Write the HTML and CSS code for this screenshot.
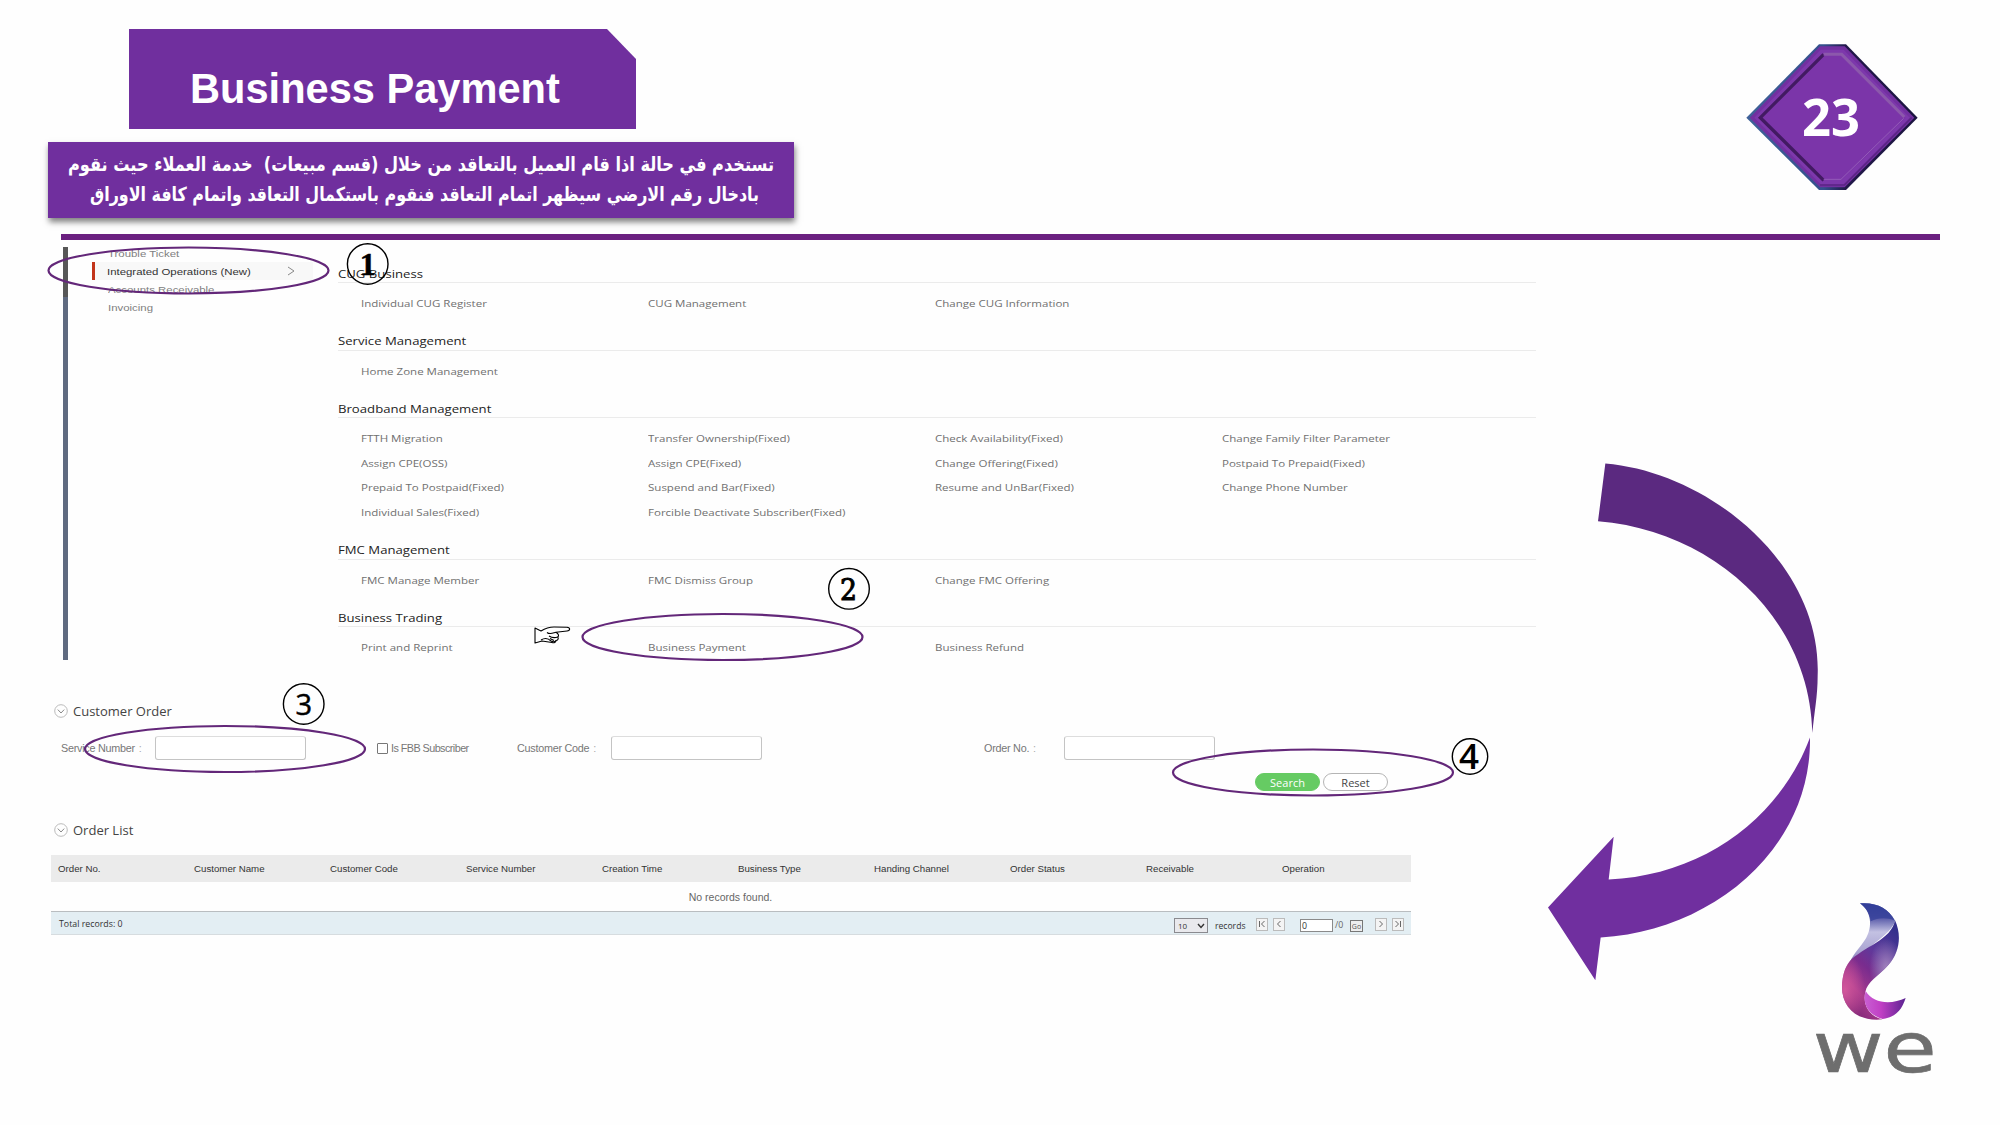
FILE: index.html
```html
<!DOCTYPE html>
<html lang="en">
<head>
<meta charset="utf-8">
<title>Business Payment</title>
<link rel="stylesheet" href="styles.css">
</head>
<body>
<div class="slide">
  <header class="head">
    <div class="head-left">
      <h1 class="title"><span>Business Payment</span></h1>
      <svg class="note" viewBox="0 0 746 76" lang="ar" direction="rtl">
        <text x="373" y="28.500" textLength="706" lengthAdjust="spacingAndGlyphs">تستخدم في حالة اذا قام العميل بالتعاقد من خلال (قسم مبيعات)&nbsp; خدمة العملاء حيث نقوم</text>
        <text x="376.500" y="58.500" textLength="669" lengthAdjust="spacingAndGlyphs">بادخال رقم الارضي سيظهر اتمام التعاقد فنقوم باستكمال التعاقد واتمام كافة الاوراق</text>
      </svg>
    </div>
    <svg class="badge" viewBox="0 0 522 444">
      <defs>
        <linearGradient id="rim" x1="0" y1="0" x2="1" y2="0"><stop offset="0" stop-color="#3f6299"/><stop offset=".45" stop-color="#34508d"/><stop offset=".58" stop-color="#22184a"/><stop offset="1" stop-color="#1b1440"/></linearGradient>
      </defs>
      <path d="M222 4H303L518 224L303 441H222L4 224Z" fill="url(#rim)"/>
      <path d="M225 10H299L508 224L299 433H225L14 224Z" fill="#7230a0"/>
      <path d="M227 20H296L494 224L296 424H227L28 224Z" fill="#7d38ac"/>
      <path d="M234 32H292L482 224L290 411H234L42 224Z" fill="#7b35a9"/>
      <path d="M236 34L46 224L236 412" fill="none" stroke="#421a62" stroke-width="10"/>
      <path d="M236 34H290L478 222" fill="none" stroke="#8c58ac" stroke-width="9"/>
      <path d="M236 409H288L476 226" fill="none" stroke="#935bb8" stroke-width="3"/>
      <path d="M225 426H298L500 224" fill="none" stroke="#5c2486" stroke-width="5"/>
      <text class="badge-num" x="258" y="279" text-anchor="middle" textLength="174" lengthAdjust="spacingAndGlyphs">23</text>
    </svg>
  </header>
  <div class="rule"></div>

  <div class="columns">
    <main>
      <section class="menu-shot">
        <div class="track"></div>
        <nav class="side">
          <div class="side-item"><span>Trouble Ticket</span></div>
          <div class="side-item active"><span>Integrated Operations (New)</span>
            <svg class="chev" viewBox="0 0 8 10"><path d="M1 1L7 5L1 9" fill="none" stroke="#888" stroke-width="1"/></svg></div>
          <div class="side-item"><span>Accounts Receivable</span></div>
          <div class="side-item"><span>Invoicing</span></div>
        </nav>
        <div class="groups">
          <h2><span>CUG Business</span></h2>
          <div class="links"><span>Individual CUG Register</span><span>CUG Management</span><span>Change CUG Information</span></div>
          <h2><span>Service Management</span></h2>
          <div class="links"><span>Home Zone Management</span></div>
          <h2><span>Broadband Management</span></h2>
          <div class="links">
            <span>FTTH Migration</span><span>Transfer Ownership(Fixed)</span><span>Check Availability(Fixed)</span><span>Change Family Filter Parameter</span>
            <span>Assign CPE(OSS)</span><span>Assign CPE(Fixed)</span><span>Change Offering(Fixed)</span><span>Postpaid To Prepaid(Fixed)</span>
            <span>Prepaid To Postpaid(Fixed)</span><span>Suspend and Bar(Fixed)</span><span>Resume and UnBar(Fixed)</span><span>Change Phone Number</span>
            <span>Individual Sales(Fixed)</span><span>Forcible Deactivate Subscriber(Fixed)</span>
          </div>
          <h2><span>FMC Management</span></h2>
          <div class="links"><span>FMC Manage Member</span><span>FMC Dismiss Group</span><span>Change FMC Offering</span></div>
          <h2><span>Business Trading</span></h2>
          <div class="links"><span>Print and Reprint</span><span>Business Payment</span><span>Business Refund</span></div>
        </div>
      </section>

      <section class="order-shot">
        <h3><svg class="fold" viewBox="0 0 14 14"><circle cx="7" cy="7" r="6.3"/><path d="M3.8 5.6L7 9L10.2 5.6"/></svg><span>Customer Order</span></h3>
        <div class="form">
          <label class="f-service">Service Number <i>:</i></label><div class="box"></div>
          <div class="check"></div><label class="f-fbb">Is FBB Subscriber</label>
          <label class="f-code">Customer Code <i>:</i></label><div class="box"></div>
          <label class="f-order">Order No. <i>:</i></label><div class="box"></div>
        </div>
        <div class="actions"><button class="go">Search</button><button>Reset</button></div>
        <h3><svg class="fold" viewBox="0 0 14 14"><circle cx="7" cy="7" r="6.3"/><path d="M3.8 5.6L7 9L10.2 5.6"/></svg><span>Order List</span></h3>
        <div class="table">
          <div class="thead"><span>Order No.</span><span>Customer Name</span><span>Customer Code</span><span>Service Number</span><span>Creation Time</span><span>Business Type</span><span>Handing Channel</span><span>Order Status</span><span>Receivable</span><span>Operation</span></div>
          <div class="empty">No records found.</div>
          <div class="tfoot">
            <span class="total">Total records: 0</span>
            <div class="select">10<svg viewBox="0 0 8 6"><path d="M1 1L4 4.5L7 1" fill="none" stroke="#333" stroke-width="1.4"/></svg></div>
            <span class="records">records</span>
            <svg class="pg" viewBox="0 0 12 14"><rect x=".5" y=".5" width="11" height="12"/><path d="M3.5 3V9M8.5 3L5.5 6L8.5 9"/></svg>
            <svg class="pg pg-prev" viewBox="0 0 12 14"><rect x=".5" y=".5" width="11" height="12"/><path d="M7.5 3L4.5 6L7.5 9"/></svg>
            <div class="page">0</div><span class="of">/0</span><div class="jump">Go</div>
            <svg class="pg" viewBox="0 0 12 14"><rect x=".5" y=".5" width="11" height="12"/><path d="M4.5 3L7.5 6L4.5 9"/></svg>
            <svg class="pg pg-last" viewBox="0 0 12 14"><rect x=".5" y=".5" width="11" height="12"/><path d="M8.5 3V9M3.5 3L6.5 6L3.5 9"/></svg>
          </div>
        </div>
      </section>
    </main>

    <aside>
      <svg class="arrow" viewBox="120 60 840 1460" preserveAspectRatio="none">
        <path fill="#5b2980" d="M316 67C630 92 965 350 953 660C953 720 943 760 937 822C930 500 640 255 294 229Z"/>
        <path fill="#702f9f" d="M930 834C935 1150 630 1378 302 1394L286 1514L144 1310L341 1112L326 1232C610 1220 840 1060 930 834Z"/>
      </svg>
      <svg class="logo" viewBox="90 60 390 530">
        <defs>
          <linearGradient id="tip" x1="0" y1="0" x2="0" y2="1"><stop offset="0" stop-color="#2d3b97"/><stop offset=".22" stop-color="#5355a6"/><stop offset=".45" stop-color="#c3c1e2"/><stop offset=".75" stop-color="#aaa4d2"/><stop offset="1" stop-color="#6e62a9"/></linearGradient>
          <linearGradient id="body" x1=".75" y1="0" x2=".2" y2="1"><stop offset="0" stop-color="#34308c"/><stop offset=".3" stop-color="#5d3a9c"/><stop offset=".5" stop-color="#792c8e"/><stop offset=".75" stop-color="#a83a8c"/><stop offset="1" stop-color="#7a2474"/></linearGradient>
          <radialGradient id="glow" cx=".05" cy=".7" r=".36"><stop offset="0" stop-color="#d2579b"/><stop offset="1" stop-color="#d2579b" stop-opacity="0"/></radialGradient>
          <radialGradient id="shine" cx=".78" cy=".48" r=".3"><stop offset="0" stop-color="#a183bd"/><stop offset="1" stop-color="#a183bd" stop-opacity="0"/></radialGradient>
          <linearGradient id="tail" x1="0" y1="0" x2="1" y2="0"><stop offset="0" stop-color="#c95fd3"/><stop offset=".4" stop-color="#c03fc4"/><stop offset="1" stop-color="#5b2391"/></linearGradient>
        </defs>
        <path fill="url(#tip)" d="M240 70C290 66 325 85 345 122C335 165 250 205 203 262C215 225 240 205 258 175C278 140 275 95 240 70Z"/>
        <path fill="#34409a" d="M240 70C290 66 325 85 345 122C320 112 295 112 272 124C270 100 258 84 240 70Z" opacity=".75"/>
        <path fill="url(#body)" d="M345 121C365 165 360 215 325 255C295 288 262 305 256 336C248 372 265 408 308 418C235 426 186 385 186 320C187 285 195 262 208 245C250 200 335 180 345 121Z"/>
        <path fill="url(#glow)" d="M345 121C365 165 360 215 325 255C295 288 262 305 256 336C248 372 265 408 308 418C235 426 186 385 186 320C187 285 195 262 208 245C250 200 335 180 345 121Z"/>
        <path fill="url(#shine)" d="M345 121C365 165 360 215 325 255C295 288 262 305 256 336C248 372 265 408 308 418C235 426 186 385 186 320C187 285 195 262 208 245C250 200 335 180 345 121Z"/>
        <path fill="url(#tail)" d="M257 333C280 372 335 374 377 354C365 392 345 412 308 417C268 405 245 375 257 333Z"/>
        <text class="wordmark" x="98" y="577" textLength="372" lengthAdjust="spacingAndGlyphs">we</text>
      </svg>
    </aside>
  </div>

  <svg class="marks" viewBox="0 0 2000 1125">
    <g fill="none" stroke="#632779" stroke-width="2.2">
      <ellipse cx="188.5" cy="270.5" rx="140" ry="23"/>
      <ellipse cx="722.5" cy="637" rx="140" ry="23"/>
      <ellipse cx="225" cy="749" rx="140" ry="23"/>
      <ellipse cx="1313" cy="772.5" rx="140" ry="23"/>
    </g>
    <g fill="none" stroke="#000" stroke-width="1.4">
      <circle cx="367.7" cy="264" r="20.3"/><circle cx="849" cy="588.8" r="20.3"/><circle cx="303.7" cy="704" r="20.3"/><circle cx="1470" cy="756.5" r="17.7"/>
    </g>
    <text class="num serif" x="367.7" y="275">1</text>
    <text class="num slab" x="848.5" y="599.5" textLength="17" lengthAdjust="spacingAndGlyphs">2</text>
    <text class="num" x="303.7" y="714.5">3</text>
    <text class="num four" x="1469" y="769">4</text>
    <g fill="#fff" stroke="#000" stroke-width="1.1" stroke-linejoin="round">
      <path d="M535 628L541 631C545 628.500 550 627 554 627L567 627.200C570.500 627.600 570.500 630.600 567 631L556 632.200C559 634 559 636 557.800 637C559 639 557.500 640.500 556 640.500C556 642.500 554 643 552 642.500L542 641L535 643Z"/>
      <path fill="none" d="M547 632.500C550 635 553 633 556 632.200M549 636C552 638 555 638 557.800 637M541 640C546 637 549 639 551 641C553 642 555 642 556 640.500M550 638.500L554 640.500"/>
    </g>
  </svg>
</div>
</body>
</html>
```
FILE: styles.css
```css
* { box-sizing: border-box; }
body { margin: 0; background: #fff; font-family: "Liberation Sans", Arial, sans-serif; }
.slide { position: relative; width: 2000px; height: 1125px; overflow: hidden; background: #fefefe; }

.head { display: flex; justify-content: space-between; align-items: flex-start; height: 234px; padding: 29px 82px 0 48px; }
.title { margin: 0 0 13px 81px; width: 507px; height: 100px; padding: 35px 0 0 61px; background: #702f9e; clip-path: polygon(0 0, 478px 0, 507px 30px, 507px 100px, 0 100px); color: #fff; font-size: 41.6px; line-height: 50px; font-weight: 700; white-space: nowrap; }
.note { display: block; width: 746px; height: 76px; overflow: visible; background: #702f9e; box-shadow: 1px 4px 6px rgba(0,0,0,.5); }
.note text { fill: #fff; font: 700 19.500px "DejaVu Sans", sans-serif; direction: rtl; text-anchor: middle; }
.badge { width: 174px; height: 148px; margin: 14px -1px 0 0; }
.badge-num { fill: #fff; font: 700 157px "Open Sans", sans-serif; }
.rule { width: 1879px; height: 6px; margin-left: 61px; background: #6b2080; }

.columns { display: flex; justify-content: space-between; padding-right: 60px; }
.menu-shot { display: flex; margin: 7px 0 0 63px; height: 413px; }
.track { width: 5px; background: linear-gradient(#575757 50px, #5f6a80 50px); }
.side { width: 221px; margin: -3px 25px 0 24px; }
.side-item { display: flex; align-items: center; height: 18.2px; padding-left: 16px; font-size: 9.5px; color: #808080; white-space: nowrap; }
.side-item span { transform: scaleX(1.2); transform-origin: 0 50%; }
.side-item.active { border-left: 3px solid #c2341a; padding-left: 12px; background: #f8f8f8; color: #333; justify-content: space-between; padding-right: 18px; }
.chev { width: 8px; height: 10px; }
.groups { width: 1198px; margin-top: 16.300px; font-family: "Open Sans", "Noto Sans", sans-serif; }
.groups h2 { display: flex; align-items: center; margin: 0; height: 20px; border-bottom: 1px solid #ebebeb; padding-top: 3px; font-size: 10px; line-height: 19px; font-weight: 400; color: #222; }
.groups h2 span { transform: scaleX(1.315); transform-origin: 0 50%; }
.links { display: grid; grid-template-columns: repeat(4, 287.2px); grid-auto-rows: 24.5px; padding: 9px 0 0 22.500px; margin-bottom: 14.100px; font-size: 9px; line-height: 24.5px; color: #707070; white-space: nowrap; }
.links span { transform: scaleX(1.28); transform-origin: 0 50%; }

.order-shot { margin: 41px 0 0 51px; width: 1360px; }
.order-shot h3 { display: flex; align-items: center; gap: 5px; margin: 0 0 0 3px; height: 20px; font: 400 13px/20px "Open Sans", sans-serif; color: #444; }
.fold { width: 14px; height: 14px; fill: none; stroke: #bbb; stroke-width: 1; }
.fold path { stroke: #888; }
.form { display: flex; align-items: center; height: 24px; margin-top: 15px; padding-left: 10px; font-size: 10.8px; letter-spacing: -.25px; color: #777; white-space: nowrap; }
.form i { font-style: normal; color: #aaa; margin-left: 1px; }
.box { width: 151px; height: 24px; border: 1px solid #c4c4c4; border-top-color: #ddd; border-radius: 3px; background: #fff; }
.f-service { width: 94px; }
.check { width: 11px; height: 11px; margin: 0 3px 0 71px; border: 1px solid #777; border-radius: 1px; }
.f-fbb { width: 126px; letter-spacing: -.55px; }
.f-code { width: 94px; }
.f-order { width: 80px; margin-left: 222px; }
.actions { display: flex; gap: 3px; margin: 13px 0 29px 1204px; }
.actions button { width: 65px; height: 18px; padding: 0; border: 1px solid #b5b5b5; border-radius: 9px; background: #fff; color: #444; font: 400 11px/15px "Open Sans", sans-serif; }
.actions .go { background: #66cb63; border-color: #66cb63; color: #fff; }
.table { margin-top: 15px; }
.thead { display: grid; grid-template-columns: repeat(10, 136px); height: 27px; padding-left: 7px; background: #ebebeb; font-size: 9.7px; line-height: 27px; color: #333; white-space: nowrap; overflow: hidden; }
.empty { height: 29px; line-height: 31px; padding-right: 1px; text-align: center; font-size: 10.5px; color: #666; }
.tfoot { display: flex; align-items: flex-start; height: 24px; padding: 6px 7px 0 8px; border-top: 1px solid #b9bdc0; border-bottom: 1px solid #d6dcdf; background: #e3eef3; font: 400 8.8px/13px "Open Sans", sans-serif; color: #333; white-space: nowrap; }
.total { width: 1115px; }
.select { display: flex; justify-content: space-between; align-items: center; width: 34px; height: 15px; padding: 0 2px 0 3px; border: 1px solid #8a8a8f; background: #e9e9ed; font-size: 8px; }
.select svg { width: 8px; height: 6px; }
.records { width: 48px; padding-left: 7px; line-height: 16px; font-size: 8.6px; }
.pg { width: 12px; height: 14px; fill: #f4f4f4; stroke: #bbb; stroke-width: 1; }
.pg path { fill: none; stroke: #666; }
.pg-prev, .pg-last { margin-left: 5px; }
.page { width: 33px; height: 13px; margin: 1px 2px 0 15px; padding-left: 1px; border: 1px solid #8a8a8a; background: #fff; line-height: 12px; }
.of { width: 15px; line-height: 15px; color: #666; }
.jump { width: 13px; height: 12px; margin: 2px 12px 0 0; border: 1px solid #777; background: #eee; font-size: 7px; line-height: 11px; text-align: center; color: #555; }

aside { display: flex; flex-direction: column; width: 400px; padding-top: 221.400px; }
.arrow { width: 280px; height: 521.400px; }
.logo { width: 130px; height: 176.700px; align-self: flex-end; margin: -82.800px 0 0; overflow: visible; }
.wordmark { font: 400 206px "DejaVu Sans", sans-serif; fill: #6e6e6e; stroke: #6e6e6e; stroke-width: 2; }

.marks { position: absolute; inset: 0; width: 2000px; height: 1125px; pointer-events: none; }
.num { font: 400 29px "Open Sans", sans-serif; text-anchor: middle; stroke: #000; stroke-width: .5; }
.serif { font: 700 32px "Liberation Serif", serif; }
.slab { font: 400 29px "DejaVu Serif", serif; stroke-width: 1; }
.four { font: 600 35px "Open Sans", sans-serif; stroke-width: 0; }
```
